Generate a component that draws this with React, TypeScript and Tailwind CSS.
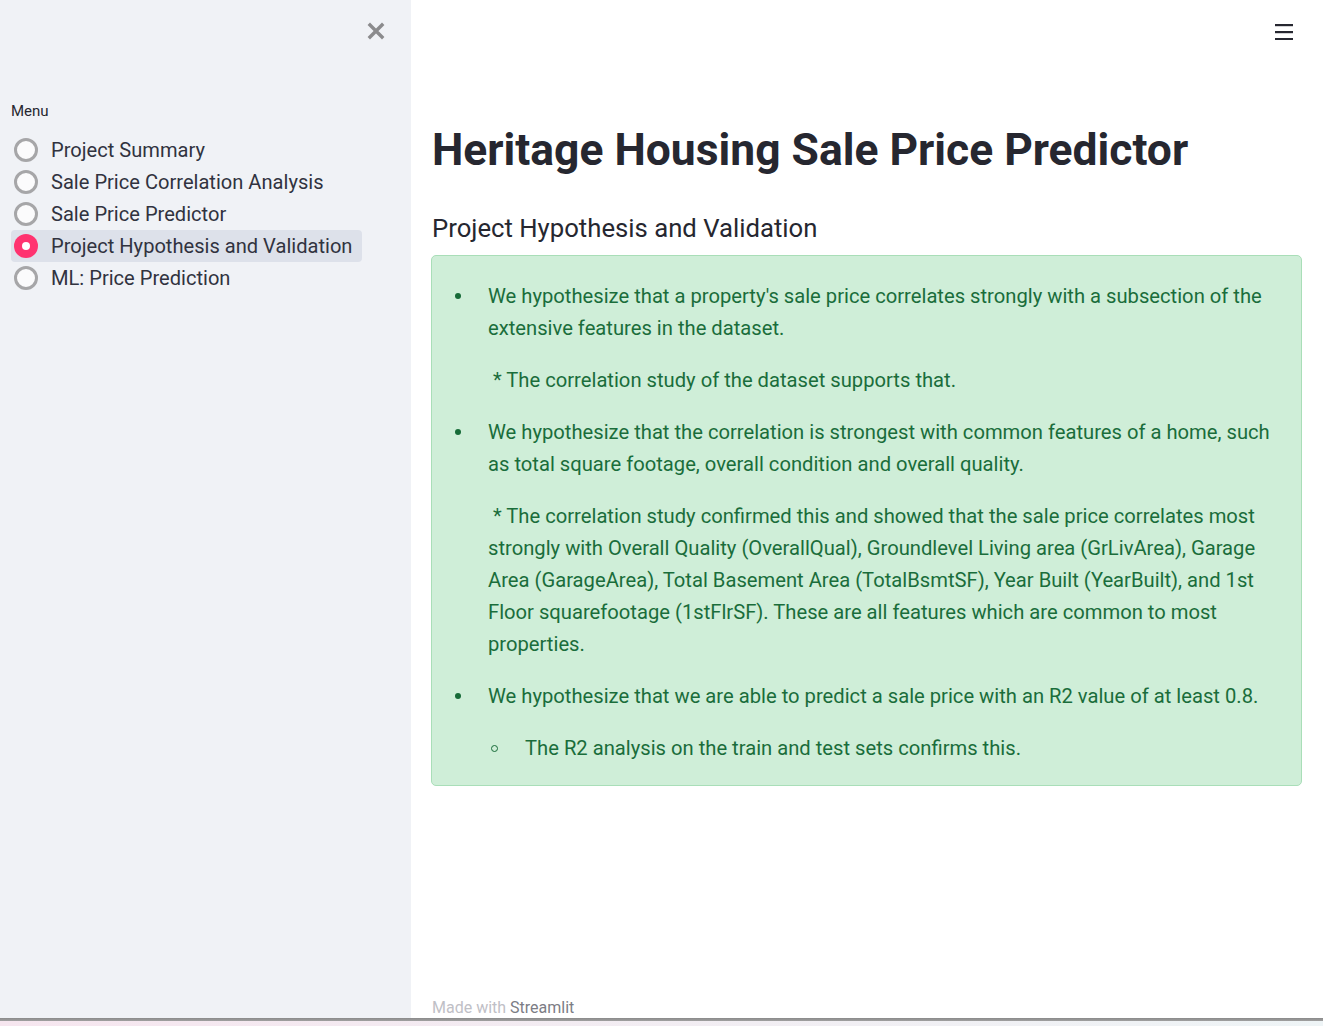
import React from "react";

const menu = [
  "Project Summary",
  "Sale Price Correlation Analysis",
  "Sale Price Predictor",
  "Project Hypothesis and Validation",
  "ML: Price Prediction",
];

function Radio({ selected }: { selected: boolean }) {
  if (selected) {
    return (
      <span className="flex h-[24px] w-[24px] shrink-0 items-center justify-center rounded-full bg-[#ff3370]">
        <span className="h-[8px] w-[8px] rounded-full bg-white" />
      </span>
    );
  }
  return <span className="h-[24px] w-[24px] shrink-0 rounded-full border-[3px] border-[#a6a6a8] bg-[#fbfbfc]" />;
}

function Bullet() {
  return (
    <span className="flex w-[56px] shrink-0 justify-center pr-[4px] pt-[13px]">
      <span className="h-[6px] w-[6px] rounded-full bg-[#176b38]" />
    </span>
  );
}

export default function App() {
  return (
    <div className="flex h-[1026px] w-[1323px] flex-col overflow-hidden bg-white font-['Roboto',sans-serif]">
      <div className="flex h-[1018px] w-full">
        {/* Sidebar */}
        <aside className="flex h-full w-[411px] shrink-0 flex-col bg-[#f0f2f6] pl-[11px]">
          <div className="flex h-[101px] justify-end pr-[26px] pt-[22px]">
            <svg width="18" height="18" viewBox="0 0 18 18" className="block">
              <path d="M3 3 L15 15 M15 3 L3 15" stroke="#8b8b8d" strokeWidth="3.4" strokeLinecap="square" />
            </svg>
          </div>
          <div className="text-[15px] leading-[20px] text-[#262730]">Menu</div>
          <div className="mt-[13px] flex flex-col">
            {menu.map((m, i) => {
              const sel = i === 3;
              return (
                <div
                  key={m}
                  className={
                    sel
                      ? "flex h-[32px] w-fit items-center gap-[13px] rounded-[4px] bg-[#dde1ea] pl-[3px] pr-[10px]"
                      : "flex h-[32px] w-fit items-center gap-[13px] pl-[3px] pr-[10px]"
                  }
                >
                  <Radio selected={sel} />
                  <span className="whitespace-nowrap text-[20.1px] leading-[32px] text-[#31333f]">{m}</span>
                </div>
              );
            })}
          </div>
        </aside>

        {/* Main */}
        <main className="flex min-w-0 flex-1 flex-col pl-[20px] pr-[21px]">
          <div className="flex h-[124px] justify-end pr-[9px] pt-[24px]">
            <svg width="18" height="16" viewBox="0 0 18 16" className="block">
              <rect x="0" y="0" width="18" height="2.2" fill="#262730" />
              <rect x="0" y="7" width="18" height="2.2" fill="#262730" />
              <rect x="0" y="14" width="18" height="2.2" fill="#262730" />
            </svg>
          </div>
          <h1 className="pl-[1px] text-[44.4px] font-bold leading-[52px] text-[#262730]">
            Heritage Housing Sale Price Predictor
          </h1>
          <h2 className="mt-[36px] pl-[1px] text-[25.7px] font-normal leading-[32px] text-[#262730]">
            Project Hypothesis and Validation
          </h2>
          <div className="mt-[11px] rounded-[5px] border border-[#a9deb8] bg-[#cfeed8] pb-[21px] pr-[20px] pt-[24px] text-[20.2px] leading-[32px] text-[#1a6d3b]">
            <div className="flex">
              <Bullet />
              <div className="flex-1">
                <p>We hypothesize that a property's sale price correlates strongly with a subsection of the extensive features in the dataset.</p>
                <p className="mt-[20px]">{"\u00a0* The correlation study of the dataset supports that."}</p>
              </div>
            </div>
            <div className="mt-[20px] flex">
              <Bullet />
              <div className="flex-1">
                <p>We hypothesize that the correlation is strongest with common features of a home, such as total square footage, overall condition and overall quality.</p>
                <p className="mt-[20px]">
                  {"\u00a0* The correlation study confirmed this and showed that the sale price correlates most strongly with Overall Quality (OverallQual), Groundlevel Living area (GrLivArea), Garage Area (GarageArea), Total Basement Area (TotalBsmtSF), Year Built (YearBuilt), and 1st Floor squarefootage (1stFlrSF). These are all features which are common to most properties."}
                </p>
              </div>
            </div>
            <div className="mt-[20px] flex">
              <Bullet />
              <div className="flex-1">
                <p>We hypothesize that we are able to predict a sale price with an R2 value of at least 0.8.</p>
                <div className="mt-[20px] flex">
                  <span className="flex w-[37px] shrink-0 pl-[3px] pt-[13px]">
                    <span className="h-[7px] w-[7px] rounded-full border border-[#176b38]" />
                  </span>
                  <p className="flex-1">The R2 analysis on the train and test sets confirms this.</p>
                </div>
              </div>
            </div>
          </div>
          <div className="flex-1" />
          <div className="pl-[1px] text-[16px] leading-[20px]">
            <span className="text-[#bfc0c6]">Made with </span>
            <span className="text-[#7c7d85]">Streamlit</span>
          </div>
        </main>
      </div>
      <div className="h-[3px] w-full bg-gradient-to-b from-[#8a8a8a] to-[#a0a0a0]" />
      <div className="h-[5px] w-full bg-gradient-to-r from-[#f6e6ef] to-[#eef4f6]" />
    </div>
  );
}
